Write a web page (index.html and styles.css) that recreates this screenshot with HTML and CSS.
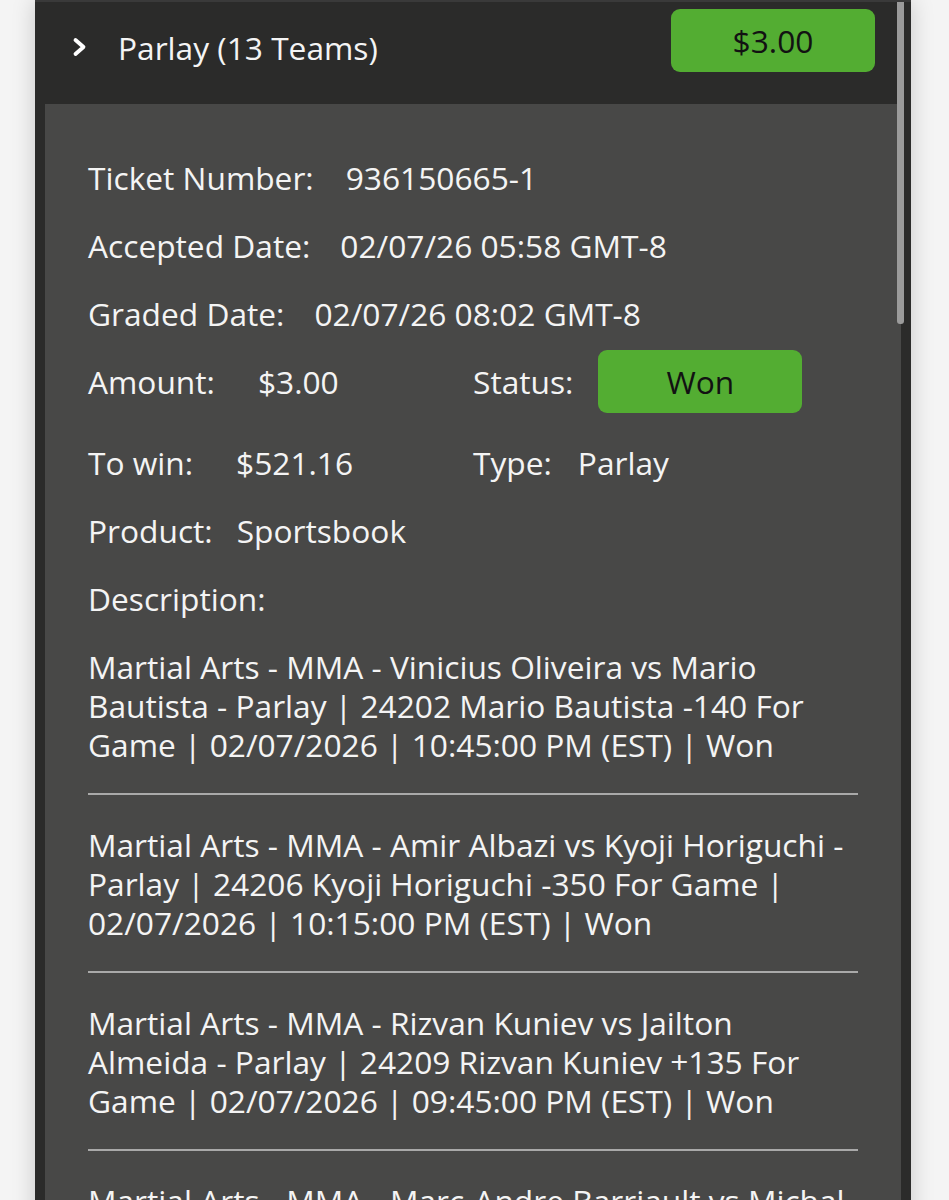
FILE: index.html
```html
<!DOCTYPE html>
<html lang="en">
<head>
        <meta charset="UTF-8">
        <meta name="viewport" content="width=device-width, initial-scale=1.0">
        <title>Bet History</title>
        <link rel="stylesheet" href="styles.css">
</head>
<body>
        <div class="bet-card">
                <div class="scroll-thumb"></div>
                <div class="bet-head">
                        <svg class="chevron" width="16" height="20" viewBox="0 0 16 20">
                                <path d="M3.5 3 L11.5 10 L3.5 17" fill="none" stroke="#fff" stroke-width="3.8" stroke-linecap="round" stroke-linejoin="round"/>
                        </svg>
                        <h2 class="bet-title">Parlay (13 Teams)</h2>
                        <div class="pill head-pill">$3.00</div>
                </div>

                <div class="bet-body">
                        <div class="row">
                                <span class="label">Ticket Number:</span>
                                <span class="value gap-32">936150665-1</span>
                        </div>
                        <div class="row">
                                <span class="label">Accepted Date:</span>
                                <span class="value gap-30">02/07/26 05:58 GMT-8</span>
                        </div>
                        <div class="row">
                                <span class="label">Graded Date:</span>
                                <span class="value gap-30">02/07/26 08:02 GMT-8</span>
                        </div>
                        <div class="row split pill-row">
                                <div class="col">
                                        <span class="label">Amount:</span>
                                        <span class="value gap-43">$3.00</span>
                                </div>
                                <div class="col">
                                        <span class="label">Status:</span>
                                        <div class="pill status-pill">Won</div>
                                </div>
                        </div>
                        <div class="row split">
                                <div class="col">
                                        <span class="label">To win:</span>
                                        <span class="value gap-43">$521.16</span>
                                </div>
                                <div class="col">
                                        <span class="label">Type:</span>
                                        <span class="value gap-26">Parlay</span>
                                </div>
                        </div>
                        <div class="row">
                                <span class="label">Product:</span>
                                <span class="value gap-24">Sportsbook</span>
                        </div>
                        <div class="row">
                                <span class="label">Description:</span>
                        </div>

                        <div class="legs">
                                <div class="leg">Martial Arts - MMA - Vinicius Oliveira vs Mario Bautista - Parlay | 24202 Mario Bautista -140 For Game | 02/07/2026 | 10:45:00 PM (EST) | Won</div>
                                <div class="leg">Martial Arts - MMA - Amir Albazi vs Kyoji Horiguchi - Parlay | 24206 Kyoji Horiguchi -350 For Game | 02/07/2026 | 10:15:00 PM (EST) | Won</div>
                                <div class="leg">Martial Arts - MMA - Rizvan Kuniev vs Jailton Almeida - Parlay | 24209 Rizvan Kuniev +135 For Game | 02/07/2026 | 09:45:00 PM (EST) | Won</div>
                                <div class="leg">Martial Arts - MMA - Marc-Andre Barriault vs Michal Oleksiejczuk - Parlay | 24211 Michal Oleksiejczuk -155 For Game | 02/07/2026 | 09:15:00 PM (EST) | Won</div>
                        </div>
                </div>
        </div>
</body>
</html>
```

FILE: styles.css
```css
*{
        margin: 0;
        padding: 0;
        box-sizing: border-box;
}
body{
        background-color: #f4f4f4;
        font-family: "Open Sans", "Noto Sans", sans-serif;
        color: #f4f4f4;
        height: 1200px;
        overflow: hidden;
}
.bet-card{
        position: relative;
        width: 876px;
        margin-left: 35px;
        min-height: 1200px;
        background-color: #2b2b2a;
        border-top: 2px solid #3a3a3a;
        box-shadow: 0 0 22px rgba(0, 0, 0, 0.18);
}
/* scrollbar thumb sits over the right edge of the panel */
.scroll-thumb{
        position: absolute;
        top: 0;
        left: 862px;
        width: 7px;
        height: 322px;
        background-color: #9b9b9b;
        border-radius: 0 0 3px 3px;
}
.bet-head{
        display: flex;
        align-items: center;
        height: 102px;
        padding: 0 36px 0 37px;
}
.chevron{
        margin-top: -12px;
        margin-right: 30px;
}
.bet-title{
        flex: 1;
        font-size: 31.7px;
        font-weight: 400;
        margin-top: -12px;
}
.pill{
        background-color: #53ad32;
        color: #121212;
        border-radius: 9px;
        text-align: center;
        font-size: 31.7px;
        height: 63px;
        line-height: 63px;
}
.head-pill{
        width: 204px;
        margin-top: -25px;
}
.bet-body{
        background-color: #484847;
        margin: 0 10px;
        padding: 54px 43px 0 43px;
        min-height: 1100px;
}
.row{
        display: flex;
        align-items: center;
        font-size: 31.7px;
        line-height: 39px;
        margin-bottom: 29px;
}
.split .col{
        display: flex;
        align-items: center;
        width: 385px;
}
.pill-row{
        margin-top: -12px;
        margin-bottom: 30px;
}
.status-pill{
        width: 204px;
        margin-left: 25px;
}
.gap-24{ margin-left: 24px; }
.gap-26{ margin-left: 26px; }
.gap-30{ margin-left: 30px; }
.gap-32{ margin-left: 32px; }
.gap-43{ margin-left: 43px; }
.leg{
        font-size: 31.7px;
        line-height: 39px;
        padding: 30px 0 29px 0;
        border-bottom: 2px solid #a9a9a9;
}
.leg:first-child{
        padding-top: 0;
}
```
